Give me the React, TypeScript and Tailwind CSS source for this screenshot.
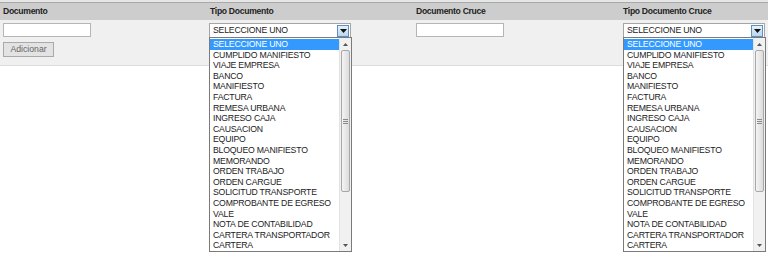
import React from "react"

const tipos = [
  "SELECCIONE UNO",
  "CUMPLIDO MANIFIESTO",
  "VIAJE EMPRESA",
  "BANCO",
  "MANIFIESTO",
  "FACTURA",
  "REMESA URBANA",
  "INGRESO CAJA",
  "CAUSACION",
  "EQUIPO",
  "BLOQUEO MANIFIESTO",
  "MEMORANDO",
  "ORDEN TRABAJO",
  "ORDEN CARGUE",
  "SOLICITUD TRANSPORTE",
  "COMPROBANTE DE EGRESO",
  "VALE",
  "NOTA DE CONTABILIDAD",
  "CARTERA TRANSPORTADOR",
  "CARTERA",
]

function TextBox() {
  return <div className="h-[14px] w-[88px] border border-[#b5b5b5] bg-white" />
}

// select abierto con su lista desplegada
function OpenSelect() {
  return (
    <div className="relative w-[142px]">
      <div className="flex h-[15px] items-center border border-[#a5a5a5] bg-white pl-[3px]">
        <span className="flex-1 text-[8.7px] leading-none tracking-[-0.2px] text-[#222]">SELECCIONE UNO</span>
        <span className="mr-px flex h-[12px] w-[12px] items-center justify-center border border-[#5f8fbf] bg-gradient-to-b from-[#e6f2fc] to-[#b9d6ef]">
          <svg width="7" height="4" viewBox="0 0 7 4">
            <path d="M0 0h7L3.5 4z" fill="#111" />
          </svg>
        </span>
      </div>
      <div className="absolute left-0 top-[14px] flex h-[215px] w-[143px] border border-[#7a7a7a] bg-white">
        <ul className="flex-1 pt-px">
          {tipos.map((t, i) => (
            <li
              key={t}
              className={`h-[10.6px] pl-[3px] text-[8.7px] leading-[10.6px] tracking-[-0.2px] whitespace-nowrap ${
                i === 0 ? "bg-[#3399ff] text-white" : "text-[#222]"
              }`}
            >
              {t}
            </li>
          ))}
        </ul>
        <div className="flex w-[12px] flex-col border-l border-[#e2e2e2] bg-[#f1f1f1]">
          <div className="flex h-[12px] items-center justify-center">
            <svg width="5" height="3" viewBox="0 0 5 3">
              <path d="M0 3h5L2.5 0z" fill="#555" />
            </svg>
          </div>
          <div className="mx-px flex h-[142px] items-center justify-center rounded-[2px] border border-[#a8a8a8] bg-gradient-to-r from-[#f4f4f4] to-[#dcdcdc]">
            <div className="flex flex-col gap-px">
              <div className="h-px w-[5px] bg-[#8a8a8a]" />
              <div className="h-px w-[5px] bg-[#8a8a8a]" />
              <div className="h-px w-[5px] bg-[#8a8a8a]" />
            </div>
          </div>
          <div className="flex-1" />
          <div className="flex h-[12px] items-center justify-center">
            <svg width="5" height="3" viewBox="0 0 5 3">
              <path d="M0 0h5L2.5 3z" fill="#555" />
            </svg>
          </div>
        </div>
      </div>
    </div>
  )
}

export default function App() {
  return (
    <div className="h-[256px] w-[768px] overflow-hidden bg-white font-['Liberation_Sans',Arial,sans-serif]">
      <div className="h-[2px] bg-[#e6e6e6]" />
      <div className="grid h-[18px] grid-cols-[207px_207px_207px_147px] items-center border-t border-[#a8a8a8] bg-[#cdcdcd] text-[8.6px] font-bold tracking-[-0.3px] text-[#222]">
        <div className="pl-[3px]">Documento</div>
        <div className="pl-[3px]">Tipo Documento</div>
        <div className="pl-[2px]">Documento Cruce</div>
        <div className="pl-[2px]">Tipo Documento Cruce</div>
      </div>
      <div className="grid h-[46px] grid-cols-[207px_207px_207px_147px] border-b border-[#dcdcdc] bg-[#f0f0f0] pt-[3px]">
        <div className="flex flex-col gap-[5px] pl-[3px]">
          <TextBox />
          <button className="h-[15px] w-[51px] border border-[#a9a9a9] bg-[#e3e3e3] text-[8.7px] leading-none text-[#666]">
            Adicionar
          </button>
        </div>
        <div className="pl-[2px]">
          <OpenSelect />
        </div>
        <div className="pl-[2px]">
          <TextBox />
        </div>
        <div className="pl-[2px]">
          <OpenSelect />
        </div>
      </div>
    </div>
  )
}
